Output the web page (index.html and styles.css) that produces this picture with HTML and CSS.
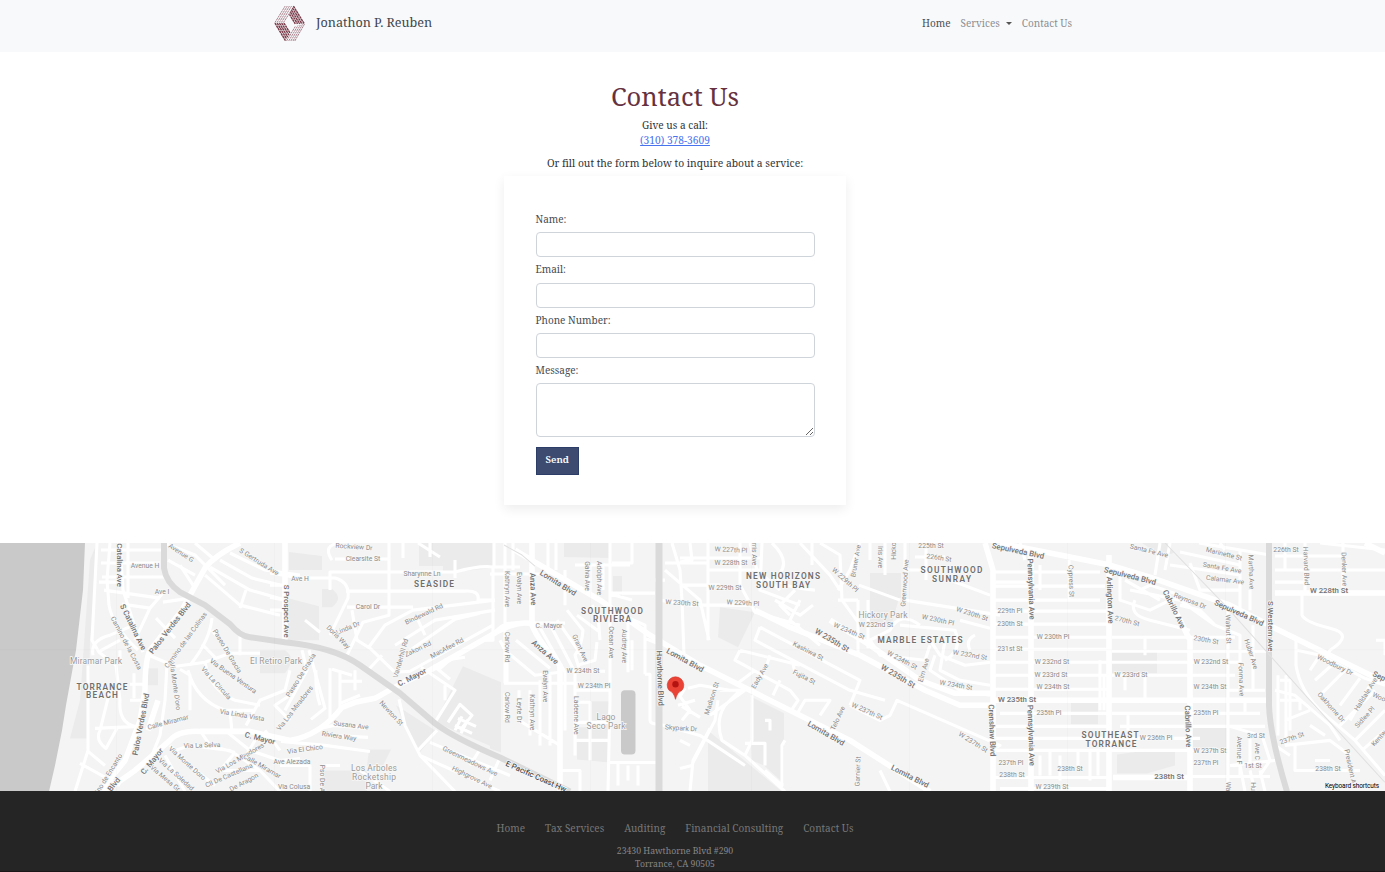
FILE: index.html
```html
<!DOCTYPE html>
<html lang="en">
<head>
<meta charset="utf-8">
<title>Contact Us - Jonathon P. Reuben</title>
<link rel="stylesheet" href="styles.css">
</head>
<body>
<header class="header">
  <nav class="navbar">
    <a class="brand">
      <svg class="logo" viewBox="0 0 32 38" fill="none">
        <g stroke="#a57c86" stroke-width="1" stroke-dasharray="2.4 .6">
          <path d="M1 18 11.500 1M3.200 18 13.700 1M5.400 18 15.900 1M7.600 18 18.100 1M9.800 18 20 2M13 37 22 22M15.200 37 24.800 21M17.400 37 27.200 20.500M19.600 37 29.400 20M21.500 37 31.500 19.500" />
        </g>
        <g stroke="#793b49" stroke-width="1.500" stroke-dasharray="2.600 .5">
          <path d="M1 18.500 12 37M3.300 18.500 13 34.800M5.600 18.500 14.200 33M7.900 18.500 15.400 31M10.200 18.500 16.600 29M16 9.500 22 19.500M17 7.300 24.300 19.500M18 5.200 26.600 19.500M19 3 28.900 19.500M20 1 31 19" />
        </g>
      </svg>
      <span>Jonathon P. Reuben</span>
    </a>
    <div class="nav-links">
      <a class="active">Home</a>
      <a class="drop">Services</a>
      <a>Contact Us</a>
    </div>
  </nav>
</header>

<main class="main">
  <h1>Contact Us</h1>
  <p class="call">Give us a call:<br><a class="phone">(310) 378-3609</a></p>
  <p class="inquire">Or fill out the form below to inquire about a service:</p>
  <form class="card">
    <label for="name">Name:</label>
    <input id="name" type="text">
    <label for="email">Email:</label>
    <input id="email" type="text">
    <label for="phone">Phone Number:</label>
    <input id="phone" type="text">
    <label for="message">Message:</label>
    <textarea id="message"></textarea>
    <button type="button">Send</button>
  </form>
</main>

<svg class="map" viewBox="0 543 1385 248" preserveAspectRatio="none">
  <rect class="land" x="0" y="542" width="1385" height="250"/>
  <path class="water" d="M0 543H85L83 590 76 650 66 705 62 730 55 765 49 791H0z"/>
  <g class="block">
    <path d="M90 560 97 543 95 600 90 640 88 738H70L80 700z"/>
    <path d="M260 650h25q12 8 0 23h-25zM289 552l33 4v14h-33zM287 598l32 8v34h-32zM322 589h10q12 9 0 18h-10zM419 543h24v23h-24zM443 543h50v25l-50 5zM463 666 501 682V750L435 722zM396 705 437 731 418 754zM369 749h22l-8 16h-16zM322 770h45v21h-45zM148 668h10v17h-10z"/>
    <path d="M564 543h46v15l-46-1zM613 576h9v20h-9zM591 701h19v61l-33-3v-32h14zM720 607l35 5-17 35-20-10zM708 730 782 791H708zM750 696l34 17v70l-20-18-12-5zM870 573h31v25h-31zM870 598h29l-7 25h-22z"/>
    <path d="M1112 651h45v22h-45zM1071 702h27v22h-27zM1117 754l22-3h36v14l-28 8h-30zM1142 543h25l7 10-12 3zM1192 727h35v21h-35zM1150 651h7v22h-7zM490 680l11 4v68l-11-4z"/>
  </g>
  <rect class="water" x="621" y="690" width="14.500" height="64" rx="4"/>
  <g class="minor">
    <path d="M97 543 92 640 99 652 116 665 120 700Q118 725 140 727M93 655Q90 640 110 635L134 625M110 543 107 580 109 605Q112 625 138 650M120 543 123 590 143 652M128 543V598M101 550H162M101 563H160M102 577H164M104 590 160 598M122 604 150 608 163 593M99 582H120M150 608 135 640M156 618 175 638M163 602 190 598M98 652 120 640M120 665V650M88 665V750L75 791M88 751 105 765M80 763 120 785M95 728 140 726M110 690 100 730Q95 740 106 748L117 728M134 673V698M130 684H143M130 700H142M167 664 165 700 160 735 150 760M149 655 175 666M180 669 190 675V710M176 666 205 662 230 653H260M188 670Q196 700 225 710H255M205 662Q210 690 235 700L260 705M212 618Q210 640 190 665M212 630 230 653M202 644 215 657M240 630V655"/>
    <path d="M164 543 195 555 225 585M195 543 215 560M168 560 195 575M193 585 180 565M205 575 240 605 280 615M210 567 250 590 285 600M220 560 252 578 280 585M230 553 265 570 300 575M240 608 246 590M175 750 190 745 230 750 260 770 280 791M170 745 190 765 215 785M165 755 185 791M200 730 210 745 235 752M225 730 250 750 280 760M230 710 232 732M265 730 280 750M235 752 220 770 260 770M246 725 260 700 285 690 290 670M258 735 246 755M280 765H310V791M290 720 275 705 290 695M311 719 325 708 309 650M320 728 334 725 368 728M330 735 368 737M281 741 325 745 370 751M280 760 300 758"/>
    <path d="M270 573 300 578H335Q350 582 348 598L330 635M330 573V590M346 591H465Q480 590 478 600H495M330 574V572H455Q480 565 493 567H520M332 560Q322 545 340 543M335 559H389V615L363 622 347 655M389 543V560M403 543V558M418 543 440 557M430 543V557M455 560V578M389 574V600M347 607H413M352 610 357 640 370 648 395 672 410 671 493 625M368 648 385 625 413 610 495 600M395 645 435 620 495 610M410 650 455 619 480 613M425 635 418 620M305 620 320 632M270 585H285M270 597 285 600M270 610H285M330 668V718M340 671V708M332 669 352 675M340 681H362M340 703 360 695M399 699 405 725 420 755 455 791M418 750 437 730M430 742 510 775M420 755 500 791M480 749 470 765M500 757 490 780M445 700V685M421 667 455 690 435 722M433 665 450 679M444 660 465 657M438 670 456 654M493 567V640L482 640M494 543V567M302 650 307 670 285 710M316 670Q315 690 320 705M355 670V690M382 655 366 672M360 770 390 791M322 765H340"/>
    <path d="M448 722 460 704 472 715 460 730M458 718 476 726M455 725 472 733M462 716 455 730M468 719 461 733M490 574H540M505 543V683M513 543V570M548 543V574M556 543V570M565 570V605M575 565H630M610 543V700L608 791M632 543V563H612M632 600 610 594M590 563V592M603 563V590M610 593H655M618 613 645 625V674M628 620V672M600 640 598 615 592 605M490 640Q500 620 520 623H565M500 640 505 650 535 675 560 672M507 640V683H540M516 640 550 668M538 624 565 672V730M550 624 575 672V755M557 620 585 660M567 610 583 630Q582 645 575 655L580 671H605M577 615 600 632M577 665 595 660 597 642M504 683H580M505 693V720M519 690V720L560 745M530 690V735M540 680V745M550 675V745M575 690H610M576 702H590V760M576 722H610M575 740H608M608 762H660M618 762V785M628 765V780M638 765V785M561 770H580V791M645 674H650V720Q650 724 660 724M632 670V640M645 638 662 645M665 570 700 600 709 640M665 580H655M672 543 680 570 682 600 684 655M708 543V640M690 543 692 560 680 562M665 563H708M680 558H760M680 585H720M660 600 690 605H740M708 570H762M700 605H755"/>
    <path d="M740 543V585L755 612 800 625M750 543 757 570 780 590M762 543 760 590 800 605M772 543Q790 560 780 573T815 590M800 543 830 575 840 590M812 543V565M820 543 840 555 842 600 858 622M860 543 850 570 838 590M870 543V560M858 600H838M858 600V655M868 600V648M859 585 900 600M885 543V575M905 543V570H930M926 543V580M915 557H945M905 600 1000 615M920 625Q900 610 890 630L870 640 880 655 925 660M900 625 955 630Q963 650 945 660M945 640 940 670 960 680 990 685M930 645 925 660M800 600 790 620 820 645M795 590 780 605 790 615M775 600 800 615 813 605M760 627 860 680 850 705M760 627 755 640 850 690 885 700M740 650 735 660 790 690 798 700 790 712M740 650 800 665M770 655 765 670M755 670 735 685M792 660 795 672M780 680 773 695M850 705 880 720 890 715 897 700 1000 745 990 750M720 690H745M740 690 725 705Q715 720 722 740L745 755 752 740V695M745 743H765V765M745 755 785 791M765 770 782 785V745L785 740M798 712 805 700 830 700 820 715M710 715 745 690M685 688 680 696 690 710M678 705 695 700M682 706 700 717M690 710 682 720M660 724 700 735 745 765M710 728 693 760 690 791M688 688 700 685 730 690M680 740 690 745M680 768 692 765M693 762 715 720 718 700M765 720H770V730M880 770 890 791"/>
    <path d="M995 582H1030M995 572H1100M995 586H1105M995 600H1100M995 611H1110M995 624H1110M995 637H1110M995 649H1110M995 662H1110M995 675H1110M995 689H1110M1000 713H1110M995 726H1110M995 738H1200M995 750H1200M995 777H1110M1000 788H1110M1100 660V710M1104 675V710M1040 755V775M1050 751V775M1060 755V780M1078 751V770M1090 751V780M1098 751V775M1040 565V590M1069 560V600M1020 543 1025 560M930 640 940 655 965 665 990 662M935 655 930 670 960 690 990 695M975 635Q965 640 970 650M960 620 990 628M950 580 990 595"/>
    <path d="M1120 570V600L1150 610 1170 600M1125 580 1160 600M1130 590 1180 600 1215 625M1140 590 1150 585 1180 595M1135 600Q1128 615 1150 620L1190 630M1135 637H1145V655M1112 651H1270M1112 637H1235M1112 662H1240M1112 675H1235M1112 713H1260M1120 726H1265M1115 776H1270M1125 675V690M1145 675V700M1128 715V730M1117 700H1130M1160 543 1155 575M1170 543 1165 570M1180 552 1240 565V580M1170 565 1240 575M1190 563 1200 590 1240 590M1199 543 1270 555M1220 543 1225 550M1240 550V610M1250 590V610M1228 610V791M1215 625 1200 610 1180 605M1215 625 1240 635V690M1253 625V690H1228M1228 662V700M1237 690H1265M1245 700V713M1230 726 1260 735M1240 738V775M1250 738V765M1262 735 1270 760 1260 775M1230 765 1275 760M1245 791 1240 765M1255 791 1250 770M1265 791 1260 770"/>
    <path d="M1275 570H1385M1275 582H1310M1305 543V593M1343 543V593M1285 543V570M1275 556H1345M1320 543 1385 550M1302 593V615Q1305 622 1330 628T1330 650L1325 660M1296 640V665Q1300 690 1320 710L1355 740 1385 775M1297 650 1320 655 1365 678 1385 685M1320 655 1310 670M1335 662 1315 680M1345 670 1320 695M1360 678 1340 705M1370 685 1350 720M1340 725 1375 690M1355 740 1385 710M1362 750 1385 730M1275 690 1295 695 1330 725 1340 740M1278 675V735M1286 675V745M1280 680H1290V730M1280 700H1300V710M1285 720 1310 710M1285 745 1330 740 1350 755M1295 745V770H1360M1310 725 1325 735M1315 760H1330M1376 640H1385V655M1275 745 1290 755"/>
  </g>
  <g class="major">
    <path d="M240 543Q215 555 205 568L190 595 182 610 150 650Q145 660 145 690L140 720 125 760 100 791M105 791 135 770 170 740Q178 730 200 731H250L290 740Q320 735 342 707L355 702 375 698 400 684 430 670 500 630Q520 620 535 624M285 543V640M148 730 158 700M532 543V625Q538 640 560 665V791M515 550 535 562 600 600 650 635 700 665 760 695 850 740 930 791M755 610 790 627 860 655 925 690 960 705H995M830 620 870 645 920 680 955 693H995M985 543 993 570V791M1031 550V791M1109 555V791M995 700H1270M1000 543 1060 555 1110 565 1150 577 1230 605 1275 628 1340 660 1385 682M1165 590 1190 640V791M1275 593H1385M1365 543 1385 553M1113 777H1187"/>
  </g>
  <path class="highway hw" d="M164 543V568Q166 582 180 592L205 605 230 624Q240 636 250 637L285 642Q335 647 360 665L400 693 435 723Q455 738 500 757L570 791"/>
  <path class="highway haw" d="M659 542V791"/>
  <path class="highway west" d="M1269 542V705Q1270 735 1287 791"/>
  <path class="rail" d="M1165 543 1225 605 1310 700 1385 782M504 545 522 555 535 566"/>
  <path class="tile" d="M116.500 543V791M274.500 543V791M432.500 543V791M590.500 543V791M751.500 543V791M909.500 543V791M1067.500 543V791M1225.500 543V791M0 649.500H1385"/>

  <g class="street">
    <text transform="translate(145 566)">Avenue H</text><text transform="translate(181 553) rotate(33)">Avenue G</text><text transform="translate(162 592)">Ave I</text><text transform="translate(259 562) rotate(32)">S Gertruda Ave</text>
    <text transform="translate(126 643) rotate(62)">Camino de la Costa</text><text transform="translate(186 640) rotate(-54)">Camino de las Colinas</text><text transform="translate(227 651) rotate(59)">Paseo De Gracia</text><text transform="translate(233 676) rotate(35)">Via Buena Ventura</text><text transform="translate(216 683) rotate(48)">Via La Circula</text><text transform="translate(175 686) rotate(82)">Via Monte D'oro</text><text transform="translate(242 715) rotate(10)">Via Linda Vista</text><text transform="translate(168 722) rotate(-15)">Calle Miramar</text><text transform="translate(202 745) rotate(-2)">Via La Selva</text><text transform="translate(187 763) rotate(42)">Via Monte Doro</text><text transform="translate(176 774) rotate(42)">Via La Soledad</text><text transform="translate(165 778) rotate(40)">Via Mesa Gr</text><text transform="translate(240 758) rotate(-30)">Via Los Miradores</text><text transform="translate(262 766) rotate(30)">Calle Miramar</text><text transform="translate(229 775) rotate(-24)">Cll De Castellana</text><text transform="translate(244 782) rotate(-28)">De Aragon</text><text transform="translate(109 773) rotate(-58)">ino de Encanto</text>
    <text transform="translate(354 547) rotate(4)">Rockview Dr</text><text transform="translate(363 559)">Clearsite St</text><text transform="translate(300 579)">Ave H</text><text transform="translate(422 574)">Sharynne Ln</text><text transform="translate(368 607)">Carol Dr</text><text transform="translate(348 628) rotate(-23)">Linda Dr</text><text transform="translate(338 637) rotate(45)">Doris Way</text><text transform="translate(424 614) rotate(-25)">Bindewald Rd</text><text transform="translate(418 649) rotate(-25)">Zakon Rd</text><text transform="translate(447 648) rotate(-28)">MacAfee Rd</text><text transform="translate(401 658) rotate(-74)">Vanderhill Rd</text><text transform="translate(301 675) rotate(-58)">Paseo De Gracia</text><text transform="translate(295 708) rotate(-52)">Via Los Miradores</text><text transform="translate(391 713) rotate(47)">Newton St</text><text transform="translate(351 725) rotate(7)">Susana Ave</text><text transform="translate(339 736) rotate(9)">Riviera Way</text><text transform="translate(305 749) rotate(-8)">Via El Chico</text><text transform="translate(292 762)">Ave Alezada</text><text transform="translate(322 778) rotate(90)">Pso De A</text><text transform="translate(294 787)">Via Colusa</text><text transform="translate(470 761) rotate(26)">Greenmeadows Ave</text><text transform="translate(472 777) rotate(26)">Highgrove Ave</text>
    <text transform="translate(507 589) rotate(90)">Kathryn Ave</text><text transform="translate(519 588) rotate(90)">Evalyn Ave</text><text transform="translate(587 576) rotate(90)">Galva Ave</text><text transform="translate(599 578) rotate(90)">Adolph Ave</text><text transform="translate(549 626)">C. Mayor</text><text transform="translate(580 648) rotate(65)">Grant Ave</text><text transform="translate(611 642) rotate(90)">Ocean Ave</text><text transform="translate(624 646) rotate(90)">Audrey Ave</text><text transform="translate(507 647) rotate(90)">Carlow Rd</text><text transform="translate(583 671)">W 234th St</text><text transform="translate(594 686)">W 234th Pl</text><text transform="translate(545 686) rotate(90)">Evalyn Ave</text><text transform="translate(507 707) rotate(90)">Carlow Rd</text><text transform="translate(519 710) rotate(90)">Leyte Dr</text><text transform="translate(532 712) rotate(90)">Kathryn Ave</text><text transform="translate(576 715) rotate(90)">Ladeene Ave</text><text transform="translate(682 603) rotate(4)">W 230th St</text><text transform="translate(681 728) rotate(4)">Skypark Dr</text><text transform="translate(712 698) rotate(-72)">Madison St</text>
    <text transform="translate(731 550) rotate(3)">W 227th Pl</text><text transform="translate(731 563)">W 228th St</text><text transform="translate(725 588)">W 229th St</text><text transform="translate(743 603) rotate(3)">W 229th Pl</text><text transform="translate(754 554) rotate(90)">rris Ave</text><text transform="translate(845 580) rotate(42)">W 229th Pl</text><text transform="translate(856 561) rotate(-80)">Bruner Ave</text><text transform="translate(880 557) rotate(90)">Iris Ave</text><text transform="translate(894 551) rotate(-90)">Hicko</text><text transform="translate(905 583) rotate(-86)">Greenwood Ave</text><text transform="translate(939 558) rotate(8)">226th St</text><text transform="translate(931 546)">225th St</text><text transform="translate(876 625)">W 232nd St</text><text transform="translate(849 631) rotate(23)">W 234th St</text><text transform="translate(938 620) rotate(12)">W 230th Pl</text><text transform="translate(972 614) rotate(18)">W 230th St</text><text transform="translate(808 651) rotate(27)">Kashiwa St</text><text transform="translate(804 677) rotate(27)">Fujita St</text><text transform="translate(760 676) rotate(-60)">Eady Ave</text><text transform="translate(902 660) rotate(28)">W 234th St</text><text transform="translate(924 670) rotate(-74)">Elm Ave</text><text transform="translate(970 655) rotate(10)">W 232nd St</text><text transform="translate(956 685) rotate(10)">W 234th St</text><text transform="translate(867 711) rotate(24)">W 237th St</text><text transform="translate(838 718) rotate(-65)">Telo Ave</text><text transform="translate(858 771) rotate(-88)">Garnier St</text><text transform="translate(973 742) rotate(32)">W 237th St</text>
    <text transform="translate(1010 611)">229th Pl</text><text transform="translate(1010 624)">230th St</text><text transform="translate(1010 649)">231st St</text><text transform="translate(1053 637)">W 230th Pl</text><text transform="translate(1052 662)">W 232nd St</text><text transform="translate(1051 675)">W 233rd St</text><text transform="translate(1053 687)">W 234th St</text><text transform="translate(1049 713)">235th Pl</text><text transform="translate(1011 763)">237th Pl</text><text transform="translate(1012 775)">238th St</text><text transform="translate(1070 769)">238th St</text><text transform="translate(1052 787)">W 239th St</text><text transform="translate(1071 581) rotate(88)">Cypress St</text><text transform="translate(1149 551) rotate(14)">Santa Fe Ave</text><text transform="translate(1127 621) rotate(14)">270th St</text><text transform="translate(1131 675)">W 233rd St</text><text transform="translate(1156 738)">W 236th Pl</text>
    <text transform="translate(1224 554) rotate(14)">Marinette St</text><text transform="translate(1222 568) rotate(10)">Santa Fe Ave</text><text transform="translate(1225 580) rotate(7)">Calamar Ave</text><text transform="translate(1190 601) rotate(21)">Reynosa Dr</text><text transform="translate(1251 572) rotate(88)">Martha Ave</text><text transform="translate(1286 550)">226th St</text><text transform="translate(1306 566) rotate(88)">Harvard Blvd</text><text transform="translate(1344 569) rotate(88)">Denker Ave</text><text transform="translate(1228 629) rotate(88)">Walnut St</text><text transform="translate(1206 640) rotate(10)">230th St</text><text transform="translate(1251 654) rotate(72)">Huber Ave</text><text transform="translate(1241 679) rotate(88)">Fonma Ave</text><text transform="translate(1211 662)">W 232nd St</text><text transform="translate(1210 687)">W 234th St</text><text transform="translate(1206 713)">235th Pl</text><text transform="translate(1210 751)">W 237th St</text><text transform="translate(1206 763)">237th Pl</text><text transform="translate(1256 736)">3rd St</text><text transform="translate(1253 766)">1st St</text><text transform="translate(1239 750) rotate(90)">Avenue F</text><text transform="translate(1257 751) rotate(90)">Ave C</text><text transform="translate(1292 738) rotate(-20)">237th St</text><text transform="translate(1328 769)">238th St</text><text transform="translate(1335 665) rotate(26)">Woodbury Dr</text><text transform="translate(1331 707) rotate(48)">Oakhorne Dr</text><text transform="translate(1366 694) rotate(-58)">Halldale Ave</text><text transform="translate(1365 717) rotate(-48)">Sidlee Pl</text><text transform="translate(1379 738) rotate(-48)">Kentw</text><text transform="translate(1379 697) rotate(24)">Woo</text><text transform="translate(1350 766) rotate(78)">President A</text><text transform="translate(1228 786) rotate(90)">Wa</text><text transform="translate(1253 786) rotate(90)">Hu</text>
  </g>
  <g class="avenue">
    <text transform="translate(119 565) rotate(90)">Catalina Ave</text><text transform="translate(133 627) rotate(64)">S Catalina Ave</text><text transform="translate(170 628) rotate(-52)">Palos Verdes Blvd</text><text transform="translate(141 724) rotate(-79)">Palos Verdes Blvd</text><text transform="translate(152 761) rotate(-51)">C. Mayor</text><text transform="translate(260 738) rotate(14)">C. Mayor</text><text transform="translate(114 784) rotate(-52)">Blvd</text><text transform="translate(286 611) rotate(90)">S Prospect Ave</text><text transform="translate(412 677) rotate(-27)">C. Mayor</text><text transform="translate(533 589) rotate(88)">Anza Ave</text><text transform="translate(558 583) rotate(32)">Lomita Blvd</text><text transform="translate(545 652) rotate(41)">Anza Ave</text><text transform="translate(685 660) rotate(29)">Lomita Blvd</text><text transform="translate(660 678) rotate(88)">Hawthorne Blvd</text><text class="ink" transform="translate(536 776) rotate(24)">E Pacific Coast Hw</text><text transform="translate(832 640) rotate(31)">W 235th St</text><text transform="translate(898 676) rotate(31)">W 235th St</text><text transform="translate(826 733) rotate(30)">Lomita Blvd</text><text transform="translate(910 776) rotate(27)">Lomita Blvd</text><text transform="translate(1018 551) rotate(12)">Sepulveda Blvd</text><text transform="translate(1130 576) rotate(14)">Sepulveda Blvd</text><text transform="translate(1239 613) rotate(24)">Sepulveda Blvd</text><text transform="translate(1379 676) rotate(24)">Sep</text><text transform="translate(1031 589) rotate(88)">Pennsylvania Ave</text><text transform="translate(1031 735) rotate(88)">Pennsylvania Ave</text><text transform="translate(1110 600) rotate(88)">Arlington Ave</text><text transform="translate(1174 609) rotate(64)">Cabrillo Ave</text><text transform="translate(1188 726) rotate(88)">Cabrillo Ave</text><text transform="translate(992 730) rotate(88)">Crenshaw Blvd</text><text transform="translate(1270 626) rotate(90)">S Western Ave</text><text transform="translate(1017 699)">W 235th St</text><text transform="translate(1329 590)">W 228th St</text><text transform="translate(1169 776)">238th St</text>
  </g>
  <g class="area">
    <text x="102" y="686.500" textLength="51">TORRANCE</text><text x="102" y="695" textLength="32">BEACH</text><text x="434" y="584" textLength="40">SEASIDE</text><text x="612" y="610.500" textLength="62">SOUTHWOOD</text><text x="612" y="619" textLength="38">RIVIERA</text><text x="783" y="576" textLength="74">NEW HORIZONS</text><text x="783" y="585" textLength="54">SOUTH BAY</text><text x="951.500" y="570" textLength="62">SOUTHWOOD</text><text x="951.500" y="579" textLength="39">SUNRAY</text><text x="920" y="640" textLength="85">MARBLE ESTATES</text><text x="1110" y="735" textLength="57">SOUTHEAST</text><text x="1111" y="744" textLength="51">TORRANCE</text>
  </g>
  <g class="park">
    <text x="96" y="661" textLength="52">Miramar Park</text><text x="276" y="661" textLength="52">El Retiro Park</text><text x="374" y="768" textLength="46">Los Arboles</text><text x="374" y="777" textLength="44">Rocketship</text><text x="374" y="785.500">Park</text><text x="606" y="717">Lago</text><text x="606" y="725.500" textLength="39">Seco Park</text><text x="883" y="615" textLength="49">Hickory Park</text>
  </g>
  <path class="pin" d="M675.500 699Q674 692 669 690A8.300 8.300 0 1 1 682 690Q677 692 675.500 699z"/>
  <circle class="pin-dot" cx="675.500" cy="684" r="3.200"/>
  <rect class="key-bg" x="1321" y="782" width="64" height="9"/>
  <text class="key" x="1352" y="786" textLength="54">Keyboard shortcuts</text>
</svg>

<footer class="footer">
  <nav class="footer-links"><a>Home</a><a>Tax Services</a><a>Auditing</a><a>Financial Consulting</a><a>Contact Us</a></nav>
  <address>23430 Hawthorne Blvd #290<br>Torrance, CA 90505</address>
</footer>
</body>
</html>
```
FILE: styles.css
```css
* { box-sizing: border-box; }
body { margin: 0; height: 872px; overflow: hidden; display: flex; flex-direction: column; font: 10px/15px "Noto Serif", "Droid Serif", "DejaVu Serif", serif; color: #2e3338; background: #fff; }
.header { height: 52px; flex: none; background: #f8f9fb; }
.navbar { width: 798px; margin-left: 274px; height: 46px; display: flex; justify-content: space-between; align-items: center; }
.brand { display: flex; align-items: center; gap: 11px; font-size: 12.600px; color: #40474c; }
.brand span { margin-top: -2px; }
.logo { width: 31px; height: 37px; }
.nav-links { display: flex; gap: 10px; color: #8b8e91; }
.nav-links .active { color: #4a4e52; }
.drop { display: flex; align-items: center; gap: 6px; }
.drop::after { content: ""; border: 3px solid transparent; border-top-color: #555; border-bottom: 0; }
.main { height: 490.500px; flex: none; width: 1350px; padding-top: 28px; display: flex; flex-direction: column; align-items: center; text-align: center; }
h1 { margin: 0 0 5px; font-size: 25.500px; line-height: 33px; font-weight: 400; color: #66323f; }
p { margin: 0 0 8px; }
.call { font-size: 10.100px; }
.phone { color: #4873ef; text-decoration: underline; font-size: 10.200px; }
.inquire { margin-bottom: 5px; font-size: 10.300px; }
.card { width: 342px; height: 329px; padding: 36px 31px 0 31.500px; display: flex; flex-direction: column; align-items: flex-start; background: #fff; box-shadow: 0 4px 11px rgba(0, 0, 0, .075); }
.card label { height: 15px; margin-bottom: 5.300px; color: #454b52; }
.card input, .card textarea { width: 279.500px; height: 25px; margin: 0 0 5px; padding: 0; border: 1px solid #ced4da; border-radius: 4px; background: #fff; }
.card textarea { height: 54px; margin-bottom: 10px; resize: vertical; }
.card button { width: 43.500px; height: 28px; padding: 0 0 3px; border: 1px solid #2c3e68; background: #3e4b70; color: #fff; font: 600 9.700px "Noto Serif", "Droid Serif", "DejaVu Serif", serif; }
.map { width: 1385px; height: 248.500px; flex: none; display: block; font-family: Roboto, sans-serif; }
.map text { text-anchor: middle; dominant-baseline: central; paint-order: stroke; stroke: #f8f8f8; stroke-width: 1.500px; }
.land { fill: #f4f4f4; }
.water { fill: #c9c9c9; }
.block { fill: #ebebeb; }
.minor, .major, .highway, .rail, .tile { fill: none; stroke: #fff; stroke-linejoin: round; }
.minor { stroke-width: 3.100; }
.major { stroke-width: 5.500; }
.highway { stroke: #dadada; }
.hw { stroke-width: 6; }
.haw { stroke-width: 7; }
.west { stroke-width: 6; }
.rail { stroke: #e0e0e0; stroke-width: 1; }
.tile { stroke: #000; stroke-opacity: .015; }
.street { font-size: 6.800px; fill: #8b8b8b; }
.avenue { font-size: 7.800px; font-weight: 500; fill: #717171; }
.avenue .ink { fill: #505050; }
.area { font-size: 8.300px; font-weight: 600; fill: #6e6e6e; }
.park { font-size: 8.500px; fill: #9b9b9b; }
.pin { fill: #ea4335; stroke: #d2342a; stroke-width: .6; }
.pin-dot { fill: #b31412; }
.key-bg { fill: #f5f5f5; opacity: .8; }
.map .key { font-size: 6.500px; fill: #000; stroke: none; }
.footer { flex: 1; padding: 30px 35px 0 0; border-bottom: 4px solid #1b1718; background: #252525; text-align: center; color: #858585; }
.footer-links { display: flex; justify-content: center; gap: 20px; color: #777; }
address { margin-top: 9px; font-size: 8.700px; line-height: 13px; font-style: normal; }
```
